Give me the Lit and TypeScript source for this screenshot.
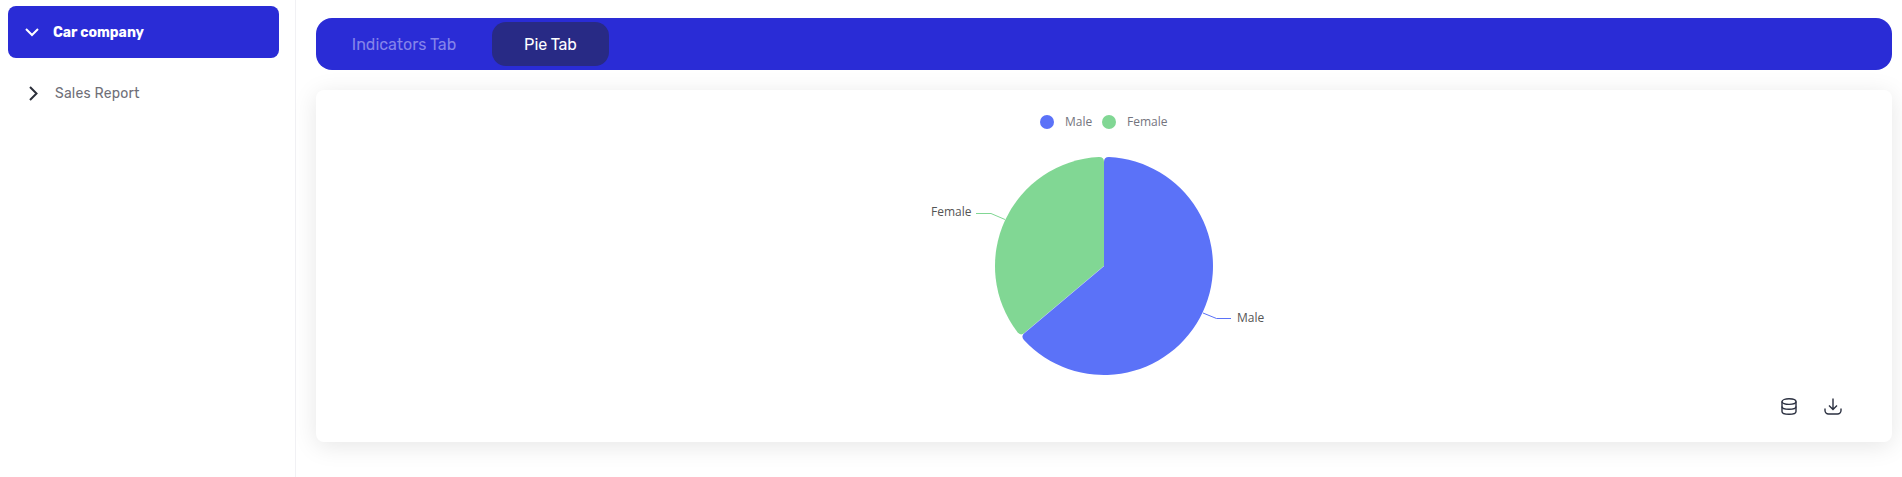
import { LitElement, html, css, svg } from "lit";
import { customElement } from "lit/decorators.js";

const CX = 788;
const CY = 176;
const R = 109;
const RC = 5;
const BOUNDARY = (229.9 * Math.PI) / 180;

const pt = (r: number, a: number) =>
  `${(CX + r * Math.sin(a)).toFixed(2)} ${(CY - r * Math.cos(a)).toFixed(2)}`;

function slice(a0: number, a1: number) {
  const d = RC / R;
  const large = a1 - a0 > Math.PI ? 1 : 0;
  return `M${CX} ${CY} L${pt(R - RC, a0)} Q${pt(R, a0)} ${pt(R, a0 + d)} A${R} ${R} 0 ${large} 1 ${pt(R, a1 - d)} Q${pt(R, a1)} ${pt(R - RC, a1)} Z`;
}

@customElement("app-root")
export class AppRoot extends LitElement {
  static styles = css`
    :host {
      display: flex;
      width: 1902px;
      height: 477px;
      overflow: hidden;
      background: #fff;
      font-family: Rubik, Roboto, "Liberation Sans", sans-serif;
    }
    .sidebar {
      width: 296px;
      flex: none;
      box-sizing: border-box;
      border-right: 1px solid #f1f1f4;
      padding: 6px 16px 0 8px;
    }
    .group {
      height: 52px;
      border-radius: 8px;
      background: #2a2cd6;
      color: #fff;
      display: flex;
      align-items: center;
      padding-left: 17px;
      gap: 14px;
      font-size: 14px;
      font-weight: 700;
    }
    .link {
      display: flex;
      align-items: center;
      height: 52px;
      margin-top: 9px;
      padding-left: 20px;
      gap: 17px;
      font-size: 14px;
      color: #6f6f78;
      letter-spacing: 0.2px;
    }
    .main {
      flex: 1;
      padding: 18px 10px 0 20px;
      min-width: 0;
    }
    .tabs {
      height: 52px;
      box-sizing: border-box;
      border-radius: 16px;
      background: #2a2cd6;
      display: flex;
      align-items: center;
      padding-left: 4px;
      gap: 4px;
      font-size: 16px;
    }
    .tab {
      height: 44px;
      display: flex;
      align-items: center;
      justify-content: center;
      border-radius: 14px;
      color: #8584ea;
      box-sizing: border-box;
    }
    .tab.one { width: 168px; }
    .tab.active {
      width: 117px;
      background: #282a85;
      color: #fff;
    }
    .card {
      position: relative;
      margin-top: 20px;
      height: 352px;
      border-radius: 8px;
      background: #fff;
      box-shadow: 0 4px 24px rgba(0, 0, 0, 0.1);
    }
    .chart { display: block; }
    .legend {
      font: 12px "Open Sans", "Noto Sans", sans-serif;
      fill: #74757e;
    }
    .label {
      font: 12px "Open Sans", "Noto Sans", sans-serif;
      fill: #555;
    }
    .toolbox {
      position: absolute;
      right: 50px;
      bottom: 27px;
      display: flex;
      align-items: flex-end;
      gap: 27px;
    }
    .toolbox svg { display: block; }
  `;

  private chart() {
    return svg`
      <circle cx="731" cy="32" r="7" fill="#5b72f8"></circle>
      <text class="legend" x="749" y="36">Male</text>
      <circle cx="793" cy="32" r="7" fill="#81d794"></circle>
      <text class="legend" x="811" y="36">Female</text>
      <path d="${slice(BOUNDARY, Math.PI * 2)}" fill="#81d794"></path>
      <path d="${slice(0, BOUNDARY)}" fill="#5b72f8"></path>
      <path d="M${pt(0, 0)} L${pt(R - RC, BOUNDARY)}" stroke="#fff" stroke-opacity="0.5" stroke-width="0.5"></path>
      <polyline points="660,123.5 675,123.5 689,129.5" fill="none" stroke="#81d794"></polyline>
      <polyline points="887,223 900.5,228.5 915,228.5" fill="none" stroke="#5b72f8"></polyline>
      <text class="label" x="615" y="126">Female</text>
      <text class="label" x="921" y="232">Male</text>
    `;
  }

  render() {
    return html`
      <aside class="sidebar">
        <div class="group">
          <svg width="14" height="9" viewBox="0 0 14 9" fill="none" stroke="#fff" stroke-width="2"><path d="M1 1l6 6 6-6"/></svg>
          <span>Car company</span>
        </div>
        <div class="link">
          <svg width="10" height="15" viewBox="0 0 10 15" fill="none" stroke="#2b2f3a" stroke-width="2"><path d="M2 1l6.5 6.5L2 14"/></svg>
          <span>Sales Report</span>
        </div>
      </aside>
      <main class="main">
        <div class="tabs">
          <div class="tab one">Indicators Tab</div>
          <div class="tab active">Pie Tab</div>
        </div>
        <section class="card">
          <svg class="chart" width="1576" height="352" viewBox="0 0 1576 352">${this.chart()}</svg>
          <div class="toolbox">
            <svg width="16" height="17" viewBox="0 0 16 17" fill="none" stroke="#2b3040" stroke-width="1.4">
              <ellipse cx="8" cy="3.6" rx="7" ry="2.8"/>
              <path d="M1 3.6v9.8c0 1.6 3.1 2.8 7 2.8s7-1.2 7-2.8V3.6"/>
              <path d="M1 8.5c0 1.6 3.1 2.8 7 2.8s7-1.2 7-2.8"/>
            </svg>
            <svg width="18" height="17" viewBox="0 0 18 17" fill="none" stroke="#2b3040" stroke-width="1.4">
              <path d="M9 .5v10.5M5 7.5l4 4 4-4"/>
              <path d="M1 10.5v2C1 14.4 2.6 16 4.5 16h9c1.9 0 3.5-1.6 3.5-3.5v-2"/>
            </svg>
          </div>
        </section>
      </main>
    `;
  }
}
